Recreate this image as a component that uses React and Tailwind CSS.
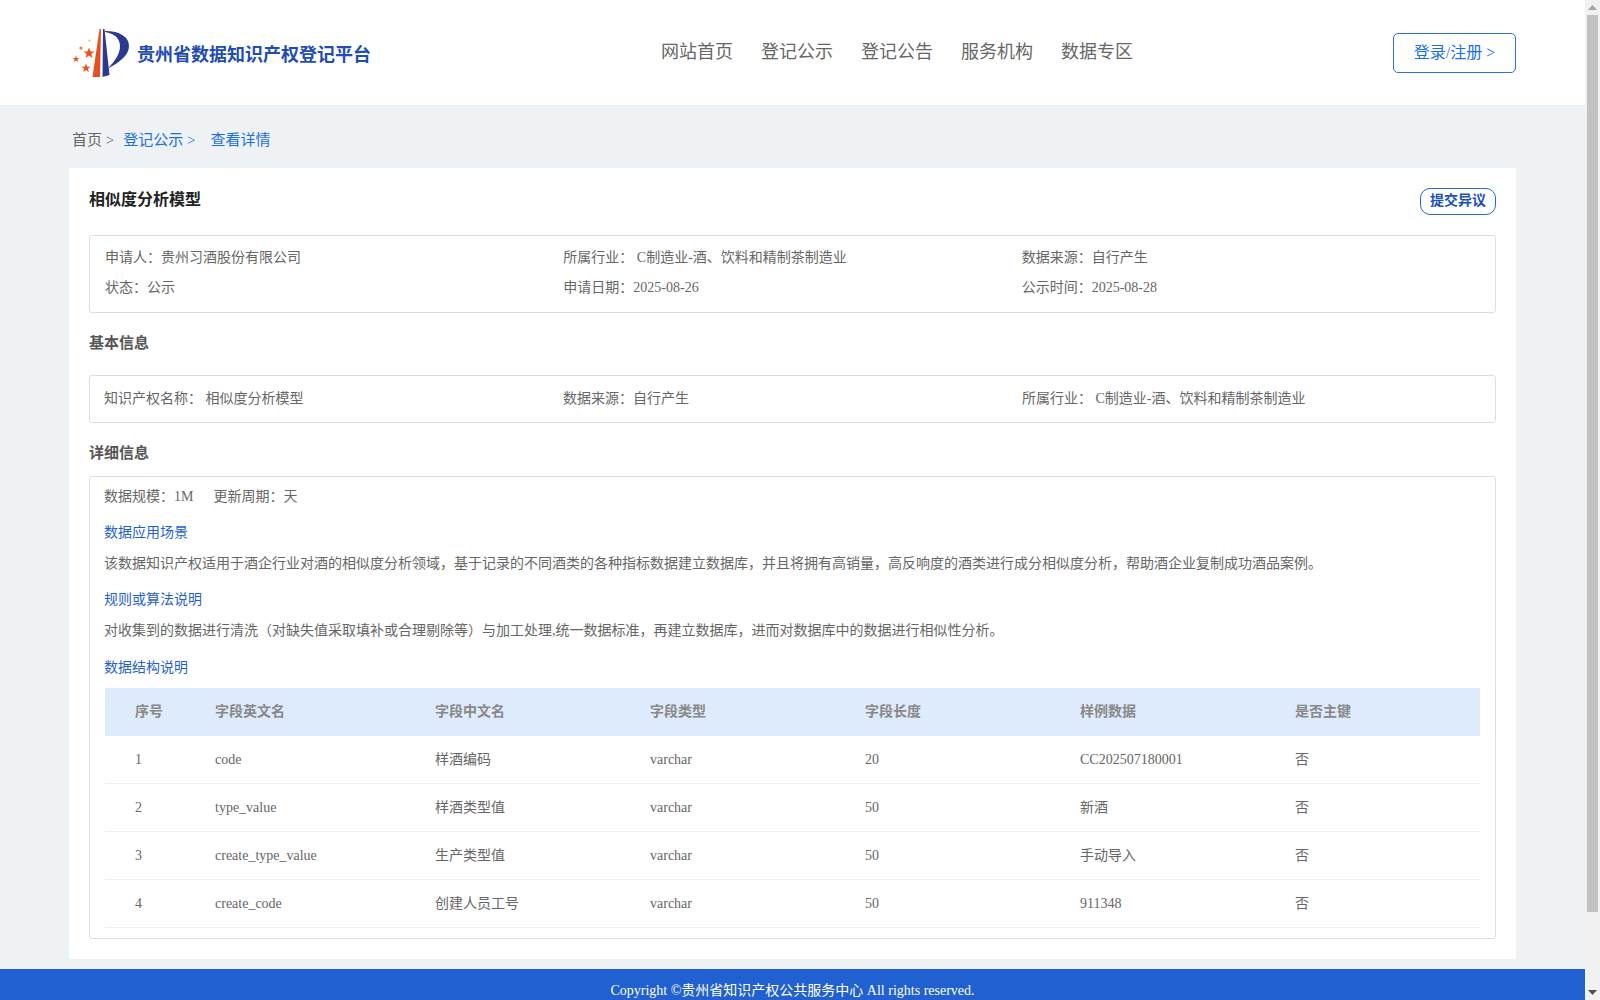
import React from 'react';

const navItems = ['网站首页', '登记公示', '登记公告', '服务机构', '数据专区'];

const summary = [
  ['申请人：贵州习酒股份有限公司', '所属行业： C制造业-酒、饮料和精制茶制造业', '数据来源：自行产生'],
  ['状态：公示', '申请日期：2025-08-26', '公示时间：2025-08-28'],
];

const columns = ['序号', '字段英文名', '字段中文名', '字段类型', '字段长度', '样例数据', '是否主键'];

const rows = [
  ['1', 'code', '样酒编码', 'varchar', '20', 'CC202507180001', '否'],
  ['2', 'type_value', '样酒类型值', 'varchar', '50', '新酒', '否'],
  ['3', 'create_type_value', '生产类型值', 'varchar', '50', '手动导入', '否'],
  ['4', 'create_code', '创建人员工号', 'varchar', '50', '911348', '否'],
];

const Logo = () => (
  <svg width="70" height="60" viewBox="0 0 70 60" className="shrink-0">
    <path d="M29.5 4 L31 4 L30 52 L22.5 52 Z" fill="#e8501f" />
    <path d="M33 4 L34.5 4 L39.5 50 L32.5 52 Z" fill="#2b3a8f" />
    <path d="M35 6 C50 6 59 12 59 21 C59 30 50 37 37.5 44 C45 36 50 29 50 21 C50 13 44 8.5 35 7 Z" fill="#2b3a8f" />
    <polygon points="19,22.5 20.5,26.5 24.5,26.5 21.3,29 22.5,33 19,30.6 15.5,33 16.7,29 13.5,26.5 17.5,26.5" fill="#e8501f" />
    <polygon points="16,38.5 17.2,41.7 20.6,41.7 17.9,43.8 18.9,47 16,45.1 13.1,47 14.1,43.8 11.4,41.7 14.8,41.7" fill="#e8501f" />
    <polygon points="6,30.5 6.9,32.9 9.5,32.9 7.4,34.5 8.2,37 6,35.5 3.8,37 4.6,34.5 2.5,32.9 5.1,32.9" fill="#e8501f" />
    <circle cx="11" cy="23" r="1.6" fill="#ee7a52" />
    <circle cx="19.5" cy="15.5" r="1" fill="#f0a080" />
  </svg>
);

const Triangle = ({ down }) => (
  <svg width="9" height="5" viewBox="0 0 9 5">
    {down ? <path d="M0 0 H9 L4.5 5 Z" fill="#505050" /> : <path d="M4.5 0 L9 5 H0 Z" fill="#a3a3a3" />}
  </svg>
);

export default function App() {
  return (
    <div className="flex h-screen overflow-hidden bg-[#eef2f5] text-[14px] text-[#666] [font-family:'Liberation_Serif','Noto_Sans_CJK_SC',serif]">
      <div className="flex-1 min-w-0">
        {/* Header */}
        <header className="h-[105px] bg-white flex items-center px-[69px]">
          <div className="w-[592px] flex items-center">
            <div className="ml-[1px] mr-[-3px] mt-[4px] flex"><Logo /></div>
            <span className="text-[18px] font-bold text-[#1f4cb5] mt-[5px]">贵州省数据知识产权登记平台</span>
          </div>
          <nav className="flex gap-[28px] text-[18px] text-[#666] mb-[1px]">
            {navItems.map((item) => (
              <a key={item}>{item}</a>
            ))}
          </nav>
          <button className="ml-auto w-[123px] h-[40px] border border-[#2a72e5] rounded-[5px] text-[16px] text-[#1a6fe8]">
            登录/注册 &gt;
          </button>
        </header>

        {/* Breadcrumb */}
        <div className="h-[63px] px-[72px] flex items-center pt-[7px] text-[15px]">
          <span>首页 &gt;</span>
          <span className="ml-[9px] text-[#1a6fe8]">登记公示 &gt;</span>
          <span className="ml-[15px] text-[#1a6fe8]">查看详情</span>
        </div>

        {/* Card */}
        <main className="mx-[69px] bg-white px-[20px] pt-[20px] pb-[20px]">
          <div className="flex items-center justify-between h-[27px] mb-[20px]">
            <h1 className="text-[16px] font-bold text-[#222] mb-[3px]">相似度分析模型</h1>
            <button className="w-[76px] h-[27px] border border-[#2a66cc] rounded-[10px] text-[14px] font-bold text-[#1c50b8] pb-[2px]">
              提交异议
            </button>
          </div>

          <div className="border border-[#ddd] rounded-[3px] px-[15px] pt-[7px] pb-[10px] flex flex-col gap-[1px]">
            {summary.map((row, i) => (
              <div key={i} className="grid grid-cols-3 h-[29px] items-center">
                {row.map((cell) => (
                  <span key={cell}>{cell}</span>
                ))}
              </div>
            ))}
          </div>

          <h2 className="h-[62px] pb-[2px] flex items-center text-[15px] font-bold text-[#555]">基本信息</h2>

          <div className="border border-[#ddd] rounded-[3px] pl-[14px] pr-[15px] pb-[2px] h-[48px] grid grid-cols-[459px_459px_1fr] items-center">
            <span>知识产权名称： 相似度分析模型</span>
            <span>数据来源：自行产生</span>
            <span>所属行业： C制造业-酒、饮料和精制茶制造业</span>
          </div>

          <h2 className="h-[53px] pt-[7px] flex items-center text-[15px] font-bold text-[#555]">详细信息</h2>

          <div className="border border-[#ddd] rounded-[3px] pl-[14px] pr-[15px] pt-[8px] pb-[10px]">
            <div className="h-[22px] flex items-center gap-[20px]">
              <span>数据规模：1M</span>
              <span>更新周期：天</span>
            </div>
            <h3 className="h-[22px] mt-[14px] flex items-center text-[#1f5fd0]">数据应用场景</h3>
            <p className="h-[22px] mt-[9px] flex items-center">
              该数据知识产权适用于酒企行业对酒的相似度分析领域，基于记录的不同酒类的各种指标数据建立数据库，并且将拥有高销量，高反响度的酒类进行成分相似度分析，帮助酒企业复制成功酒品案例。
            </p>
            <h3 className="h-[22px] mt-[14px] flex items-center text-[#1f5fd0]">规则或算法说明</h3>
            <p className="h-[22px] mt-[9px] flex items-center">
              对收集到的数据进行清洗（对缺失值采取填补或合理剔除等）与加工处理,统一数据标准，再建立数据库，进而对数据库中的数据进行相似性分析。
            </p>
            <h3 className="h-[22px] mt-[15px] flex items-center text-[#1f5fd0]">数据结构说明</h3>

            <div className="mt-[10px] ml-[1px]">
              <div className="h-[48px] pb-[2px] bg-[#deebfd] grid grid-cols-[110px_220px_215px_215px_215px_215px_1fr] items-center font-bold text-[#888]">
                {columns.map((col, i) => (
                  <span key={col} className={i === 0 ? 'pl-[30px]' : ''}>{col}</span>
                ))}
              </div>
              {rows.map((row) => (
                <div key={row[0]} className="h-[48px] border-b border-[#eceef1] grid grid-cols-[110px_220px_215px_215px_215px_215px_1fr] items-center">
                  {row.map((cell, i) => (
                    <span key={i} className={i === 0 ? 'pl-[30px]' : ''}>{cell}</span>
                  ))}
                </div>
              ))}
            </div>
          </div>
        </main>

        {/* Footer */}
        <footer className="mt-[10px] h-[112px] bg-[#2060d0] text-white text-center pt-[11px]">
          Copyright ©贵州省知识产权公共服务中心 All rights reserved.
        </footer>
      </div>

      {/* Scrollbar */}
      <div className="w-[15px] shrink-0 bg-[#f1f1f1] flex flex-col items-center">
        <div className="h-[15px] flex items-center justify-center"><Triangle /></div>
        <div className="w-[11px] h-[897px] bg-[#c1c1c1]" />
        <div className="flex-1" />
        <div className="h-[15px] flex items-center justify-center"><Triangle down /></div>
      </div>
    </div>
  );
}
